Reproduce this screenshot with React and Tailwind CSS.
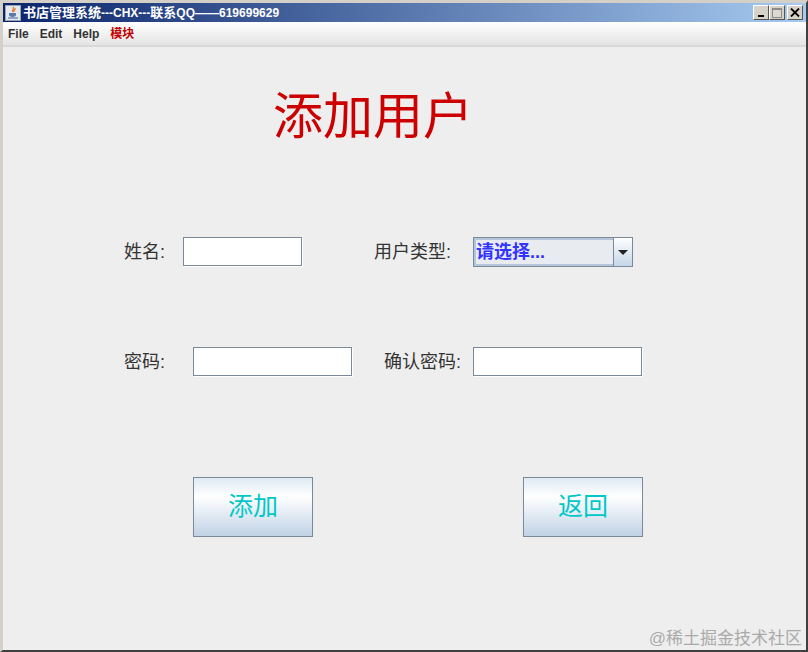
import { useState } from 'react';

const CJK = "font-['Liberation_Sans','Noto_Sans_CJK_SC',sans-serif]";
const INPUT = 'h-[29px] border border-[#7a8a99] bg-white shadow-[1px_1px_0_#fff]';

function JavaIcon() {
  return (
    <svg width="16" height="16" viewBox="0 0 16 16" className="shrink-0">
      <rect x="0.5" y="0.5" width="15" height="15" fill="#e6e8ee" stroke="#9aa3b5" />
      <path d="M8 2c2 2-2 3 0 5M10 3c1 2-2 2-1 4" fill="none" stroke="#e0701c" strokeWidth="1.2" />
      <path d="M4 8h7v1.500c0 1.500-1 2.500-3.500 2.500S4 11 4 9.500z" fill="#5a78ac" />
      <path d="M3 13h10" stroke="#5a78ac" strokeWidth="1.200" />
    </svg>
  );
}

function WinButton({ children, className = '' }) {
  return (
    <div className={`flex h-[15px] w-[16px] items-center justify-center border border-t-white border-r-[#555] border-b-[#555] border-l-white bg-[#d6d2c8] ${className}`}>
      {children}
    </div>
  );
}

function TitleBar() {
  return (
    <div className="flex h-[19px] items-center bg-[linear-gradient(90deg,#0a246a,#a6caf0)] pr-[3px] pl-[2px]">
      <JavaIcon />
      <span className="ml-[2px] text-[12px] leading-none font-bold text-white">
        <span className="text-[13px]">书店管理系统</span>---CHX---<span className="text-[13px]">联系</span>QQ——619699629
      </span>
      <div className="ml-auto flex items-center">
        <WinButton>
          <span className="mt-[7px] h-[2px] w-[6px] bg-black" />
        </WinButton>
        <WinButton>
          <span className="h-[10px] w-[10px] border border-t-2 border-[#8a8a8a] bg-[#dcd9d0]" />
        </WinButton>
        <WinButton className="ml-[2px]">
          <svg width="10" height="9" viewBox="0 0 10 9">
            <path d="M1 0.500l8 8M9 0.500l-8 8" stroke="#000" strokeWidth="1.800" />
          </svg>
        </WinButton>
      </div>
    </div>
  );
}

function MenuBar() {
  return (
    <div className="flex h-[25px] items-center gap-[11px] border-b-2 border-[#d8d8d8] bg-[linear-gradient(180deg,#ffffff,#e4e4e4)] pl-[5px] text-[12px] font-bold text-[#333]">
      <span>File</span>
      <span>Edit</span>
      <span>Help</span>
      <span className="text-[#c00000]">模块</span>
    </div>
  );
}

function Field({ label, labelClass, children }) {
  return (
    <div className="flex items-center">
      <span className={`text-[18px] leading-none text-[#333] ${labelClass}`}>{label}</span>
      {children}
    </div>
  );
}

function ActionButton({ children }) {
  return (
    <button className="h-[60px] w-[120px] border border-[#7a8a99] bg-[linear-gradient(180deg,#dfe9f3_0%,#ffffff_32%,#c0d2e6_100%)] text-[25px] text-[#00c8c8]">
      {children}
    </button>
  );
}

export default function App() {
  const [name, setName] = useState('');
  const [pwd, setPwd] = useState('');
  const [confirm, setConfirm] = useState('');

  return (
    <div className={`relative flex h-[652px] w-[808px] flex-col overflow-hidden border-t-[3px] border-r-2 border-b-2 border-l-[3px] border-t-[#d4d0c8] border-r-[#404040] border-b-[#404040] border-l-[#d4d0c8] bg-[#eeeeee] ${CJK}`}>
      <TitleBar />
      <MenuBar />

      <h1 className="mt-[38px] ml-[270px] text-[50px] leading-[64px] font-normal text-[#cc0000]">添加用户</h1>

      <div className="mt-[88px] flex items-start pl-[121px]">
        <Field label="姓名:" labelClass="w-[59px]">
          <input value={name} onChange={(e) => setName(e.target.value)} className={`${INPUT} w-[119px]`} />
        </Field>
        <Field label="用户类型:" labelClass="ml-[72px] w-[99px]">
          <div className="flex h-[30px] w-[160px] border border-[#7a8a99] bg-[#e8ecf0]">
            <div className="flex flex-1 items-center border-2 border-r-0 border-[#b4c6d8] text-[18px] font-bold text-[#3333ff]">请选择...</div>
            <div className="flex w-[19px] items-center justify-center border-l border-[#7a8a99] bg-[linear-gradient(180deg,#ffffff,#c4d6e8)]">
              <span className="mt-[1px] h-0 w-0 border-x-[5px] border-t-[5px] border-x-transparent border-t-[#222]" />
            </div>
          </div>
        </Field>
      </div>

      <div className="mt-[80px] flex pl-[121px]">
        <Field label="密码:" labelClass="w-[69px]">
          <input type="password" value={pwd} onChange={(e) => setPwd(e.target.value)} className={`${INPUT} w-[159px]`} />
        </Field>
        <Field label="确认密码:" labelClass="ml-[32px] w-[89px]">
          <input type="password" value={confirm} onChange={(e) => setConfirm(e.target.value)} className={`${INPUT} w-[169px]`} />
        </Field>
      </div>

      <div className="mt-[101px] flex gap-[210px] pl-[190px]">
        <ActionButton>添加</ActionButton>
        <ActionButton>返回</ActionButton>
      </div>

      <span className="absolute right-[4px] bottom-[3px] text-[17px] leading-none text-[#aaaaaa]">@稀土掘金技术社区</span>
    </div>
  );
}
